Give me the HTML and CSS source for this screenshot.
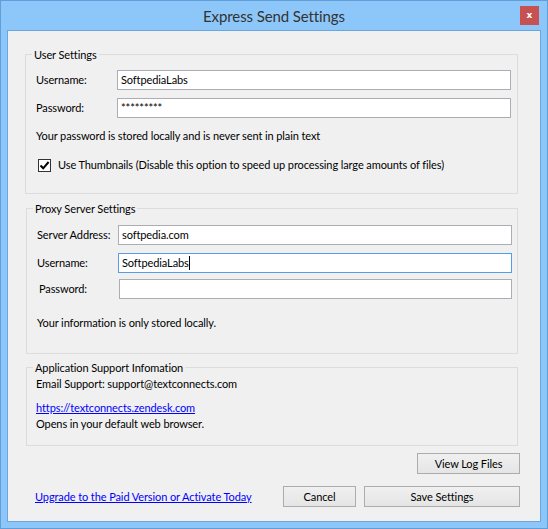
FILE: index.html
```html
<!DOCTYPE html>
<html>
<head>
<meta charset="utf-8">
<title>Express Send Settings</title>
<link rel="stylesheet" href="styles.css">
</head>
<body>
<div class="window">
  <div class="titlebar">
    <div></div>
    <div class="title">Express Send Settings</div>
    <div class="close">x</div>
  </div>
  <div class="client">
    <div class="group group-user">
      <div class="legend">User Settings</div>
      <div class="row row-first">
        <div class="label">Username:</div>
        <div class="textbox">SoftpediaLabs</div>
      </div>
      <div class="row">
        <div class="label">Password:</div>
        <div class="textbox pw">*********</div>
      </div>
      <div class="note">Your password is stored locally and is never sent in plain text</div>
      <div class="check-row">
        <span class="checkbox"><svg width="11" height="11" viewBox="0 0 11 11"><path d="M1.5 5.5 L4.2 8.3 L9.6 2" fill="none" stroke="#000" stroke-width="2"/></svg></span>
        <span>Use Thumbnails (Disable this option to speed up processing large amounts of files)</span>
      </div>
    </div>

    <div class="group group-proxy">
      <div class="legend">Proxy Server Settings</div>
      <div class="row row-first">
        <div class="label">Server Address:</div>
        <div class="textbox">softpedia.com</div>
      </div>
      <div class="row">
        <div class="label">Username:</div>
        <div class="textbox focus">SoftpediaLabs<span class="caret"></span></div>
      </div>
      <div class="row row-pw">
        <div class="label">Password:</div>
        <div class="textbox"></div>
      </div>
      <div class="note note-proxy">Your information is only stored locally.</div>
    </div>

    <div class="group group-support">
      <div class="legend">Application Support Infomation</div>
      <div class="line">Email Support: support@textconnects.com</div>
      <div class="line line-link"><a class="link" href="#">https://textconnects.zendesk.com</a></div>
      <div class="line">Opens in your default web browser.</div>
    </div>

    <div class="actions">
      <div class="log-row">
        <button class="btn btn-log">View Log Files</button>
      </div>
      <div class="bottom-row">
        <a class="link upgrade" href="#">Upgrade to the Paid Version or Activate Today</a>
        <button class="btn btn-cancel">Cancel</button>
        <button class="btn btn-save">Save Settings</button>
      </div>
    </div>
  </div>
</div>
</body>
</html>
```

FILE: styles.css
```css
* { box-sizing: border-box; }
html, body { margin: 0; padding: 0; }
body {
  width: 548px;
  height: 529px;
  font-family: Lato, "Liberation Sans", sans-serif;
  font-size: 11px;
  letter-spacing: -0.1px;
  line-height: 16px;
  color: #000;
  white-space: nowrap;
}
.window {
  width: 548px;
  height: 529px;
  background: #8dc7f9;
  border: 1px solid #5f9ed8;
  padding: 0 6px 6px 6px;
  display: flex;
  flex-direction: column;
}
.titlebar {
  height: 29px;
  flex: none;
  display: grid;
  grid-template-columns: 1fr auto 1fr;
  align-items: start;
}
.title {
  font-size: 15px;
  letter-spacing: -0.1px;
  line-height: 20px;
  color: #333333;
  padding-top: 5px;
}
.close {
  justify-self: end;
  margin-top: 5px;
  margin-right: 2px;
  width: 19px;
  height: 19px;
  background: #c75050;
  color: #fff;
  font-family: "DejaVu Sans", sans-serif;
  font-weight: bold;
  font-size: 9px;
  letter-spacing: 0;
  line-height: 18px;
  text-align: center;
}
.client {
  height: 492px;
  flex: none;
  background: #f0f0f0;
  border: 1px solid #6aa5dc;
  padding: 23px 22px 0 17px;
  display: flex;
  flex-direction: column;
}
.group {
  border: 1px solid #dcdcdc;
}
.legend {
  width: fit-content;
  margin: -8px 0 0 -4px;
  padding: 0 2px;
  background: #f0f0f0;
  line-height: 16px;
}
.group-user {
  padding: 0 6px 20px 10px;
}
.group-proxy {
  margin: 14px 0 0 1px;
  padding: 0 5px 22px 10px;
}
.group-support {
  margin: 13px 0 0 1px;
  padding: 0 5px 13px 9px;
}
.group-support .legend { margin-left: -3px; }
.row {
  display: flex;
  align-items: center;
  margin-top: 8px;
}
.row-first { margin-top: 7px; }
.group-proxy .row-first { margin-top: 8px; }
.group-proxy .row-pw { margin-top: 6px; }
.group-proxy .row-pw .label { padding-left: 2px; width: 82px; }
.label {
  width: 81px;
  flex: none;
}
.textbox {
  flex: 1;
  height: 20px;
  background: #fff;
  border: 1px solid #abadb3;
  padding-left: 3px;
  line-height: 18px;
}
.textbox.focus { border-color: #569de5; }
.caret {
  display: inline-block;
  width: 1px;
  height: 14px;
  background: #000;
  vertical-align: -3px;
}
.note { margin-top: 10px; }
.note-proxy { margin-top: 16px; }
.check-row {
  display: flex;
  align-items: center;
  margin-top: 13px;
  padding-left: 2px;
}
.checkbox {
  width: 13px;
  height: 13px;
  border: 1px solid #333;
  background: #fff;
  display: flex;
  margin-right: 7px;
}
.group-support .line:first-of-type { margin-top: 1px; }
.line-link { margin-top: 8px; }
.link {
  color: #0000ff;
  text-decoration: underline;
}
.actions {
  margin-right: -2px;
  display: flex;
  flex-direction: column;
}
.log-row {
  display: flex;
  justify-content: flex-end;
  margin-top: 7px;
}
.bottom-row {
  display: flex;
  align-items: center;
  margin-top: 12px;
}
.upgrade { margin-left: 10px; }
.btn {
  height: 21px;
  border: 1px solid #acacac;
  background: linear-gradient(#f0f0f0, #e5e5e5);
  font-family: Lato, "Liberation Sans", sans-serif;
  font-size: 11px;
  letter-spacing: -0.1px;
  color: #000;
  padding: 0;
  margin: 0;
  line-height: 18px;
}
.btn-log { width: 103px; }
.btn-cancel { width: 73px; margin-left: auto; }
.btn-save { width: 156px; margin-left: 8px; }
```
